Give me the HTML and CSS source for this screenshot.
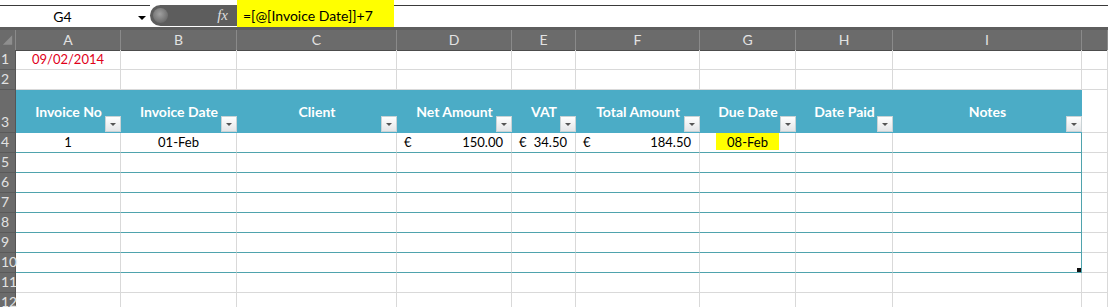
FILE: index.html
```html
<!DOCTYPE html>
<html lang="en">
<head>
    <meta charset="UTF-8">
    <title>Invoices</title>
    <link rel="stylesheet" href="styles.css">
</head>
<body>

    <div class="toolbar">
        <div class="namebox">
            <span class="namebox-text">G4</span>
            <span class="namebox-arrow"></span>
        </div>
        <div class="fx-pill">
            <span class="fx-knob"></span>
            <span class="fx-label">fx</span>
        </div>
        <div class="formula">=[@[Invoice Date]]+7</div>
        <div class="formula-rest"></div>
    </div>

    <div class="sheet">
        <div class="row colhead">
            <div class="corner">
                <svg width="16" height="20" viewBox="0 0 16 20"><polygon points="13,5 13,15 3,15" fill="#8e8e8e"/></svg>
            </div>
            <div class="col">A</div>
            <div class="col">B</div>
            <div class="col">C</div>
            <div class="col">D</div>
            <div class="col">E</div>
            <div class="col">F</div>
            <div class="col">G</div>
            <div class="col">H</div>
            <div class="col">I</div>
            <div class="col"></div>
        </div>

        <div class="row">
            <div class="num">1</div>
            <div class="cell center red">09/02/2014</div>
            <div class="cell"></div><div class="cell"></div><div class="cell"></div><div class="cell"></div>
            <div class="cell"></div><div class="cell"></div><div class="cell"></div><div class="cell"></div><div class="cell"></div>
        </div>

        <div class="row">
            <div class="num">2</div>
            <div class="cell"></div><div class="cell"></div><div class="cell"></div><div class="cell"></div><div class="cell"></div>
            <div class="cell"></div><div class="cell"></div><div class="cell"></div><div class="cell"></div><div class="cell"></div>
        </div>

        <div class="row thead">
            <div class="num">3</div>
            <div class="th">Invoice No<span class="filter"></span></div>
            <div class="th">Invoice Date<span class="filter"></span></div>
            <div class="th">Client<span class="filter"></span></div>
            <div class="th">Net Amount<span class="filter"></span></div>
            <div class="th">VAT<span class="filter"></span></div>
            <div class="th">Total Amount<span class="filter"></span></div>
            <div class="th">Due Date<span class="filter"></span></div>
            <div class="th">Date Paid<span class="filter"></span></div>
            <div class="th">Notes<span class="filter"></span></div>
            <div class="cell"></div>
        </div>

        <div class="row">
            <div class="num">4</div>
            <div class="cell td center">1</div>
            <div class="cell td center">01-Feb</div>
            <div class="cell td"></div>
            <div class="cell td acc"><span>€</span><span>150.00</span></div>
            <div class="cell td acc"><span>€</span><span>34.50</span></div>
            <div class="cell td acc"><span>€</span><span>184.50</span></div>
            <div class="cell td center"><span class="mark">08-Feb</span></div>
            <div class="cell td"></div>
            <div class="cell td last"></div>
            <div class="cell"></div>
        </div>

        <div class="row">
            <div class="num">5</div>
            <div class="cell td"></div><div class="cell td"></div><div class="cell td"></div><div class="cell td"></div><div class="cell td"></div>
            <div class="cell td"></div><div class="cell td"></div><div class="cell td"></div><div class="cell td last"></div><div class="cell"></div>
        </div>

        <div class="row">
            <div class="num">6</div>
            <div class="cell td"></div><div class="cell td"></div><div class="cell td"></div><div class="cell td"></div><div class="cell td"></div>
            <div class="cell td"></div><div class="cell td"></div><div class="cell td"></div><div class="cell td last"></div><div class="cell"></div>
        </div>

        <div class="row">
            <div class="num">7</div>
            <div class="cell td"></div><div class="cell td"></div><div class="cell td"></div><div class="cell td"></div><div class="cell td"></div>
            <div class="cell td"></div><div class="cell td"></div><div class="cell td"></div><div class="cell td last"></div><div class="cell"></div>
        </div>

        <div class="row">
            <div class="num">8</div>
            <div class="cell td"></div><div class="cell td"></div><div class="cell td"></div><div class="cell td"></div><div class="cell td"></div>
            <div class="cell td"></div><div class="cell td"></div><div class="cell td"></div><div class="cell td last"></div><div class="cell"></div>
        </div>

        <div class="row">
            <div class="num">9</div>
            <div class="cell td"></div><div class="cell td"></div><div class="cell td"></div><div class="cell td"></div><div class="cell td"></div>
            <div class="cell td"></div><div class="cell td"></div><div class="cell td"></div><div class="cell td last"></div><div class="cell"></div>
        </div>

        <div class="row">
            <div class="num">10</div>
            <div class="cell td"></div><div class="cell td"></div><div class="cell td"></div><div class="cell td"></div><div class="cell td"></div>
            <div class="cell td"></div><div class="cell td"></div><div class="cell td"></div><div class="cell td last"><span class="resize"></span></div><div class="cell"></div>
        </div>

        <div class="row">
            <div class="num">11</div>
            <div class="cell"></div><div class="cell"></div><div class="cell"></div><div class="cell"></div><div class="cell"></div>
            <div class="cell"></div><div class="cell"></div><div class="cell"></div><div class="cell"></div><div class="cell"></div>
        </div>

        <div class="row">
            <div class="num">12</div>
            <div class="cell"></div><div class="cell"></div><div class="cell"></div><div class="cell"></div><div class="cell"></div>
            <div class="cell"></div><div class="cell"></div><div class="cell"></div><div class="cell"></div><div class="cell"></div>
        </div>
    </div>

</body>
</html>
```

FILE: styles.css
```css
body {
    margin: 0;
    overflow: hidden;
    background: #ffffff;
    font-family: Lato, "Liberation Sans", sans-serif;
    font-size: 13px;
    color: #000000;
}

/* formula bar */
.toolbar {
    display: flex;
    height: 27px;
    border-bottom: 3px solid #5e5e5e;
}

.namebox {
    width: 150px;
    margin-top: 5px;
    border-top: 1px solid #3a3a3a;
    display: flex;
    align-items: center;
}

.namebox-text {
    width: 125px;
    text-align: center;
    font-size: 14px;
}

.namebox-arrow {
    width: 0;
    height: 0;
    margin-left: 13px;
    margin-top: 2px;
    border-left: 4px solid transparent;
    border-right: 4px solid transparent;
    border-top: 4px solid #000000;
}

.fx-pill {
    width: 87px;
    height: 21px;
    margin-top: 5px;
    background: #5d5d5d;
    border-radius: 11px 0 0 11px;
    display: flex;
    align-items: center;
    padding-left: 3px;
    box-sizing: border-box;
}

.fx-knob {
    width: 15px;
    height: 15px;
    border-radius: 50%;
    background: radial-gradient(circle at 45% 40%, #a0a0a0, #6a6a6a 75%);
}

.fx-label {
    margin-left: auto;
    margin-right: 9px;
    font-family: "Liberation Serif", serif;
    font-style: italic;
    font-size: 15px;
    color: #dedede;
}

.formula {
    width: 157px;
    background: #ffff00;
    font-size: 14px;
    padding: 4px 0 0 6px;
    box-sizing: border-box;
    display: flex;
    align-items: center;
}

.formula-rest {
    flex: 1;
    margin-top: 5px;
    border-top: 1px solid #3a3a3a;
}

/* grid */
.row {
    display: grid;
    grid-template-columns: 16px 105px 116px 160px 115px 64px 124px 96px 97px 189px 1fr;
    height: 20px;
}

.row.thead {
    height: 43px;
}

.row > div {
    box-sizing: border-box;
    display: flex;
    align-items: flex-end;
    padding-bottom: 2px;
    white-space: nowrap;
}

.colhead > div {
    background: #6b6b6b;
    color: #e2e2e2;
    font-size: 14px;
    justify-content: center;
    border-right: 1px solid #8a8a8a;
    border-bottom: 1px solid #4c4c4c;
}

.colhead > .corner {
    padding: 0;
    align-items: stretch;
}

.num {
    background: #6b6b6b;
    color: #e2e2e2;
    font-size: 14px;
    padding-left: 1px;
    border-right: 1px solid #555555;
    border-bottom: 1px solid #5a5a5a;
}

.cell {
    border-right: 1px solid #d9d9d9;
    border-bottom: 1px solid #d9d9d9;
    padding-left: 3px;
}

.center {
    justify-content: center;
    padding-left: 0 !important;
}

.red {
    color: #e0001a;
}

/* excel table */
.th {
    position: relative;
    background: #4bacc6;
    color: #ffffff;
    font-size: 14px;
    font-weight: bold;
    justify-content: center;
    align-items: center !important;
    padding-bottom: 0 !important;
}

.filter {
    position: absolute;
    right: 0;
    bottom: 1px;
    width: 16px;
    height: 16px;
    box-sizing: border-box;
    background: linear-gradient(#ffffff, #e4e6e8);
    border: 1px solid #c9d3d6;
}

.filter::after {
    content: "";
    position: absolute;
    left: 4px;
    top: 6px;
    border-left: 3px solid transparent;
    border-right: 3px solid transparent;
    border-top: 3px solid #555555;
}

.td {
    border-bottom-color: #4fa3ad;
}

.td.last {
    border-right-color: #4fa3ad;
    position: relative;
}

.acc {
    justify-content: space-between;
    padding: 0 8px 2px 7px !important;
}

.mark {
    background: #ffff00;
    padding: 1px 11px 0;
}

.resize {
    position: absolute;
    right: 0;
    bottom: 0;
    width: 4px;
    height: 4px;
    background: #111111;
}
```
